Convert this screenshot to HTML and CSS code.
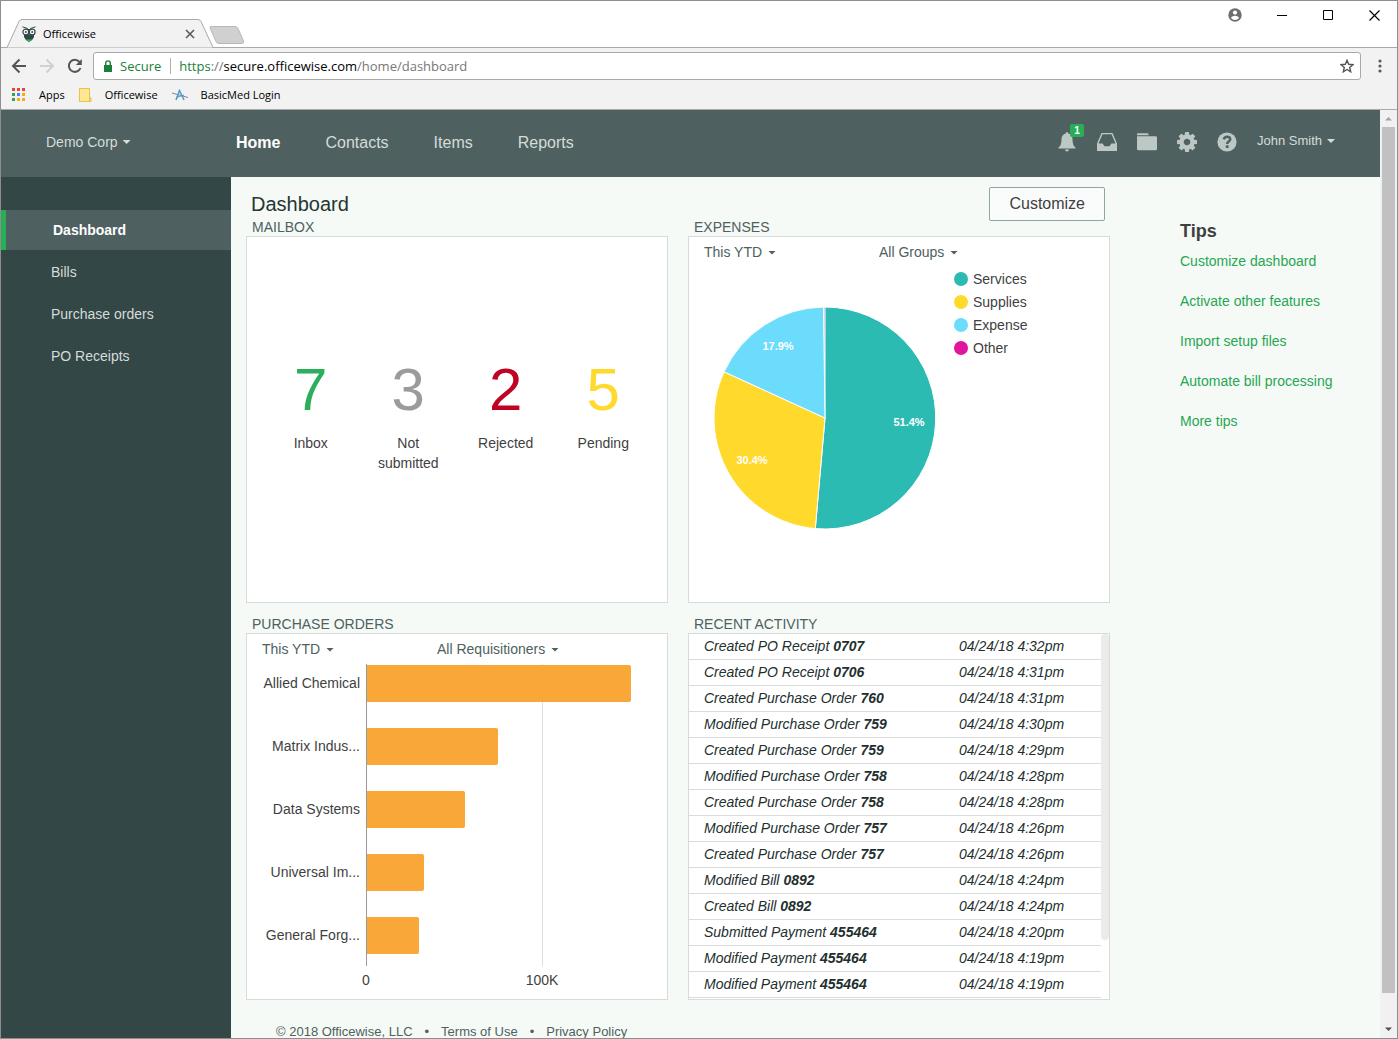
FILE: index.html
```html
<!DOCTYPE html>
<html lang="en">
<head>
<meta charset="utf-8">
<meta name="viewport" content="width=device-width, initial-scale=1">
<title>Officewise</title>
<link rel="stylesheet" href="styles.css">
</head>
<body>
<div class="window">
  <header class="browser">
    <div class="titlebar">
      <div class="tab">
        <svg class="tab-shape" viewBox="0 0 208 29" aria-hidden="true"><path d="M0 28.500H1L13 2.500Q14 .5 16 .5H192Q194 .5 195 2.500L207 28.500H208" fill="#f2f2f2" stroke="#a9a9a9"/></svg>
        <svg class="favicon" viewBox="0 0 16 16" aria-hidden="true">
          <path d="M3 8.500h10v2.500q-1 3-5 5-4-2-5-5z" fill="#334746"/>
          <path d="M5 13.500h6l-3 2.500z" fill="#2dbb62"/>
          <circle cx="4.800" cy="6" r="2.900" fill="#fff" stroke="#334746" stroke-width="1.200"/>
          <circle cx="11.200" cy="6" r="2.900" fill="#fff" stroke="#334746" stroke-width="1.200"/>
          <circle cx="4.800" cy="6" r="1" fill="#334746"/><circle cx="11.200" cy="6" r="1" fill="#334746"/>
          <path d="M1.500.8 6.500 2.500 8 4 9.500 2.500 14.500.8M8 4v5" stroke="#334746" fill="none"/>
        </svg>
        <span class="tab-title">Officewise</span>
        <button class="plain tab-close" aria-label="Close tab"><svg width="10" height="10" viewBox="0 0 10 10"><path d="M1 1l8 8M9 1 1 9" stroke="#5a5a5a" stroke-width="1.600"/></svg></button>
      </div>
      <button class="plain new-tab" aria-label="New tab"><svg width="36" height="18" viewBox="0 0 36 18"><path d="M2 .5H26Q28 .5 29 2.500L34.500 15Q35 17.500 33 17.500H10Q8 17.500 7 15.500L1 2Q.5 .5 2 .5z" fill="#d0d0d0" stroke="#b8b8b8"/></svg></button>
      <div class="window-controls">
        <button class="plain" aria-label="Profile"><svg width="14" height="14" viewBox="0 0 14 14"><circle cx="7" cy="7" r="6.700" fill="#6e6e6e"/><circle cx="7" cy="4.600" r="2.100" fill="#fff"/><path d="M2.800 9.800Q4.500 7.700 7 7.700t4.200 2.100Q9.500 12 7 12T2.800 9.800z" fill="#fff"/></svg></button>
        <button class="plain" aria-label="Minimize"><svg width="11" height="11" viewBox="0 0 11 11"><path d="M0 5.500h10" stroke="#000"/></svg></button>
        <button class="plain" aria-label="Maximize"><svg width="11" height="11" viewBox="0 0 11 11"><path d="M.5 .5h9v9h-9z" fill="none" stroke="#000"/></svg></button>
        <button class="plain" aria-label="Close"><svg width="11" height="11" viewBox="0 0 11 11"><path d="M.5 .5l10 10M10.500 .5l-10 10" stroke="#000" stroke-width="1.200"/></svg></button>
      </div>
    </div>
    <div class="toolbar">
      <div class="history">
        <button class="plain" aria-label="Back"><svg width="16" height="16" viewBox="0 0 16 16"><path d="M15 8H2M8.500 1.500 2 8l6.500 6.500" fill="none" stroke="#555" stroke-width="2"/></svg></button>
        <button class="plain" aria-label="Forward"><svg width="16" height="16" viewBox="0 0 16 16"><path d="M1 8h13M7.500 1.500 14 8l-6.500 6.500" fill="none" stroke="#d0d0d0" stroke-width="2"/></svg></button>
        <button class="plain" aria-label="Reload"><svg width="16" height="16" viewBox="0 0 16 16"><path d="M13.500 10A6 6 0 1 1 12.500 4" fill="none" stroke="#555" stroke-width="2"/><path d="M14.800 1v6h-6z" fill="#555"/></svg></button>
      </div>
      <div class="address">
        <svg width="8" height="12" viewBox="0 0 8 12" aria-hidden="true"><path d="M0 5h8v7H0z" fill="#1a7f37"/><path d="M1.700 5V3.200a2.300 2.300 0 0 1 4.600 0V5" fill="none" stroke="#1a7f37" stroke-width="1.400"/></svg>
        <span class="secure">Secure</span>
        <span class="url"><span class="scheme">https</span><span class="dim">://</span>secure.officewise.com<span class="dim">/home/dashboard</span></span>
        <button class="plain" aria-label="Bookmark this page"><svg width="14" height="14" viewBox="0 0 14 14"><path d="M7 1.300 8.700 5.300 13 5.700 9.700 8.500 10.700 12.800 7 10.500 3.300 12.800 4.300 8.500 1 5.700 5.300 5.300z" fill="none" stroke="#555" stroke-width="1.400"/></svg></button>
      </div>
      <button class="plain" aria-label="Browser menu"><svg width="4" height="14" viewBox="0 0 4 14"><circle cx="2" cy="2" r="1.600" fill="#5a5a5a"/><circle cx="2" cy="7" r="1.600" fill="#5a5a5a"/><circle cx="2" cy="12" r="1.600" fill="#5a5a5a"/></svg></button>
    </div>
    <nav class="bookmarks" aria-label="Bookmarks">
      <a href="#"><svg width="14" height="14" viewBox="0 0 14 14" aria-hidden="true"><g fill="#ea4335"><path d="M0 0h3v3H0zM5 0h3v3H5zM10 0h3v3h-3zM0 5h3v3H0z"/></g><path d="M5 5h3v3H5z" fill="#4285f4"/><path d="M10 5h3v3h-3zM5 10h3v3H5zM10 10h3v3h-3z" fill="#f9ab13"/><path d="M0 5h3v3H0zM0 10h3v3H0z" fill="#34a05a"/></svg>Apps</a>
      <a href="#"><svg width="13" height="14" viewBox="0 0 13 14" aria-hidden="true"><path d="M.5 .5h10v9h1.500v4H.5z" fill="#ffe793" stroke="#e9c04d"/><path d="M10.500 9.500v4" stroke="#e9c04d"/></svg>Officewise</a>
      <a href="#"><svg width="16" height="12" viewBox="0 0 16 12" aria-hidden="true"><path d="M4 11 7.500 1.500 12 11" fill="none" stroke="#3aa5dc" stroke-width="1.500"/><path d="M0 4l16 4.500M4 8.500 12 6" stroke="#7d8b95"/></svg>BasicMed Login</a>
    </nav>
  </header>

  <div class="viewport">
    <div class="app">
      <header class="app-header">
        <button class="plain company">Demo Corp<span class="caret"></span></button>
        <nav class="main-nav" aria-label="Main">
          <a class="current" href="#">Home</a>
          <a href="#">Contacts</a>
          <a href="#">Items</a>
          <a href="#">Reports</a>
        </nav>
        <div class="tools">
          <button class="plain tool" aria-label="Notifications">
            <svg viewBox="0 0 20 20"><path d="M10 0Q11.300 0 11.300 1.500 15.500 2.800 15.500 7.500 15.500 13.500 18.500 15.500V16.500H1.500V15.500Q4.500 13.500 4.500 7.500 4.500 2.800 8.700 1.500 8.700 0 10 0zM8 17.500h4q0 2-2 2t-2-2z" fill="currentColor"/></svg>
            <span class="badge">1</span>
          </button>
          <button class="plain tool" aria-label="Inbox"><svg viewBox="0 0 20 20"><path d="M4.500 1h11L20 11.500V19H0v-7.500zM5.500 2.300 1.500 11.500h4.200L7.400 14.300h5.200l1.700-2.800h4.200L14.500 2.300z" fill="currentColor" fill-rule="evenodd"/></svg></button>
          <button class="plain tool" aria-label="Files"><svg viewBox="0 0 20 20"><path d="M0 3.500V2Q0 1.200 1 1.200H10Q11.300 1.200 11.700 2.600V3.200H.5zM0 4.300H18.500Q20 4.300 20 5.500V17Q20 18.300 18.700 18.300H1.300Q0 18.300 0 17z" fill="currentColor"/></svg></button>
          <button class="plain tool" aria-label="Settings"><svg viewBox="0 128 1536 1536"><path d="M1024 896q0-106-75-181t-181-75-181 75-75 181 75 181 181 75 181-75 75-181zm512-109v222q0 12-8 23t-20 13l-185 28q-19 54-39 91 35 50 107 138 10 12 10 25t-9 23q-27 37-99 108t-94 71q-12 0-26-9l-138-108q-44 23-91 38-16 136-29 186-7 28-36 28h-222q-14 0-24.500-8.500t-11.500-21.500l-28-184q-49-16-90-37l-141 107q-10 9-25 9-14 0-25-11-126-114-165-168-7-10-7-23 0-12 8-23 15-21 51-66.500t54-70.500q-27-50-41-99l-183-27q-13-2-21-12.500t-8-23.500v-222q0-12 8-23t19-13l186-28q14-46 39-92-40-57-107-138-10-12-10-24 0-10 9-23 26-36 98.500-107.500t94.500-71.500q13 0 26 10l138 107q44-23 91-38 16-136 29-186 7-28 36-28h222q14 0 24.500 8.500t11.500 21.500l28 184q49 16 90 37l142-107q9-9 24-9 13 0 25 10 129 119 165 170 7 8 7 22 0 12-8 23-15 21-51 66.500t-54 70.500q26 50 41 98l183 28q13 2 21 12.500t8 23.500z" fill="currentColor"/></svg></button>
          <button class="plain tool" aria-label="Help"><svg viewBox="0 0 20 20"><circle cx="10" cy="10" r="9.600" fill="currentColor"/><path d="M6.700 7.300Q7.500 4.700 10 4.700 13.200 4.700 13.200 7.300 13.200 8.800 11.500 9.700 10.200 10.400 10.200 12" fill="none" stroke="#4e6160" stroke-width="2.600"/><path d="M8.800 13.300h2.800v2.700H8.800z" fill="#4e6160"/></svg></button>
          <button class="plain user">John Smith<span class="caret"></span></button>
        </div>
      </header>

      <div class="body">
        <nav class="sidebar" aria-label="Home">
          <a class="current" href="#">Dashboard</a>
          <a href="#">Bills</a>
          <a href="#">Purchase orders</a>
          <a href="#">PO Receipts</a>
        </nav>

        <main class="content">
          <div class="page-head">
            <h1>Dashboard</h1>
            <button class="customize">Customize</button>
          </div>
          <div class="panels">
            <section class="panel">
              <h2>MAILBOX</h2>
              <div class="card mailbox">
                <a class="stat inbox" href="#"><b>7</b><span>Inbox</span></a>
                <a class="stat draft" href="#"><b>3</b><span>Not submitted</span></a>
                <a class="stat rejected" href="#"><b>2</b><span>Rejected</span></a>
                <a class="stat pending" href="#"><b>5</b><span>Pending</span></a>
              </div>
            </section>

            <section class="panel">
              <h2>EXPENSES</h2>
              <div class="card">
                <div class="filters">
                  <span class="filter"><select aria-label="Expenses period"><option>This YTD</option></select><span class="caret"></span></span>
                  <span class="filter"><select aria-label="Expenses group"><option>All Groups</option></select><span class="caret"></span></span>
                </div>
                <div class="pie-chart">
                  <svg class="pie" viewBox="-111 -111 222 222" role="img" aria-label="Expenses by group">
                    <g stroke="#fff" stroke-width="1">
                      <path d="M0 0-2 -111H0z" fill="#e0169e"/>
                      <path d="M0 0V-111A111 111 0 1 1 -9.700 110.600z" fill="#2bbbb2"/>
                      <path d="M0 0-9.700 110.600A111 111 0 0 1 -100.900 -46.200z" fill="#ffd92c"/>
                      <path d="M0 0-100.900 -46.200A111 111 0 0 1 -1.500 -111z" fill="#6bdcfb"/>
                    </g>
                    <g class="pie-labels">
                      <text x="84" y="8">51.4%</text>
                      <text x="-73" y="46">30.4%</text>
                      <text x="-47" y="-68">17.9%</text>
                    </g>
                  </svg>
                  <ul class="legend">
                    <li class="services">Services</li>
                    <li class="supplies">Supplies</li>
                    <li class="expense">Expense</li>
                    <li class="other">Other</li>
                  </ul>
                </div>
              </div>
            </section>

            <section class="panel">
              <h2>PURCHASE ORDERS</h2>
              <div class="card">
                <div class="filters">
                  <span class="filter"><select aria-label="Purchase orders period"><option>This YTD</option></select><span class="caret"></span></span>
                  <span class="filter"><select aria-label="Requisitioner"><option>All Requisitioners</option></select><span class="caret"></span></span>
                </div>
                <div class="bar-chart">
                  <ul class="bar-names">
                    <li>Allied Chemical</li>
                    <li>Matrix Indus...</li>
                    <li>Data Systems</li>
                    <li>Universal Im...</li>
                    <li>General Forg...</li>
                  </ul>
                  <div class="plot">
                    <div class="bar" style="width:264px"></div>
                    <div class="bar" style="width:131px"></div>
                    <div class="bar" style="width:98px"></div>
                    <div class="bar" style="width:57px"></div>
                    <div class="bar" style="width:52px"></div>
                  </div>
                </div>
                <div class="ticks"><span>0</span><span>100K</span></div>
              </div>
            </section>

            <section class="panel">
              <h2>RECENT ACTIVITY</h2>
              <div class="card activity">
                <table>
                  <tbody>
                    <tr><td>Created PO Receipt <b>0707</b></td><td>04/24/18 4:32pm</td></tr>
                    <tr><td>Created PO Receipt <b>0706</b></td><td>04/24/18 4:31pm</td></tr>
                    <tr><td>Created Purchase Order <b>760</b></td><td>04/24/18 4:31pm</td></tr>
                    <tr><td>Modified Purchase Order <b>759</b></td><td>04/24/18 4:30pm</td></tr>
                    <tr><td>Created Purchase Order <b>759</b></td><td>04/24/18 4:29pm</td></tr>
                    <tr><td>Modified Purchase Order <b>758</b></td><td>04/24/18 4:28pm</td></tr>
                    <tr><td>Created Purchase Order <b>758</b></td><td>04/24/18 4:28pm</td></tr>
                    <tr><td>Modified Purchase Order <b>757</b></td><td>04/24/18 4:26pm</td></tr>
                    <tr><td>Created Purchase Order <b>757</b></td><td>04/24/18 4:26pm</td></tr>
                    <tr><td>Modified Bill <b>0892</b></td><td>04/24/18 4:24pm</td></tr>
                    <tr><td>Created Bill <b>0892</b></td><td>04/24/18 4:24pm</td></tr>
                    <tr><td>Submitted Payment <b>455464</b></td><td>04/24/18 4:20pm</td></tr>
                    <tr><td>Modified Payment <b>455464</b></td><td>04/24/18 4:19pm</td></tr>
                    <tr><td>Modified Payment <b>455464</b></td><td>04/24/18 4:19pm</td></tr>
                  </tbody>
                </table>
                <div class="mini-scroll"></div>
              </div>
            </section>
          </div>
          <footer class="footer">
            <span>© 2018 Officewise, LLC</span><span>•</span><a href="#">Terms of Use</a><span>•</span><a href="#">Privacy Policy</a>
          </footer>
        </main>

        <aside class="tips">
          <h2>Tips</h2>
          <a href="#">Customize dashboard</a>
          <a href="#">Activate other features</a>
          <a href="#">Import setup files</a>
          <a href="#">Automate bill processing</a>
          <a href="#">More tips</a>
        </aside>
      </div>
    </div>
    <div class="scrollbar" aria-hidden="true">
      <svg viewBox="0 0 17 17"><path d="M5 10.500h7L8.500 7z" fill="#a3a3a3"/></svg>
      <div class="thumb"></div>
      <svg viewBox="0 0 17 17"><path d="M5 6.500h7L8.500 10z" fill="#505050"/></svg>
    </div>
  </div>
</div>
</body>
</html>
```
FILE: styles.css
```css
* { box-sizing: border-box; }

body {
  margin: 0;
  font-family: "Liberation Sans", Arial, sans-serif;
  font-size: 14px;
  line-height: 20px;
  color: #3f3f3f;
}

h1, h2, ul { margin: 0; padding: 0; font-weight: normal; list-style: none; }
a { color: inherit; text-decoration: none; }
svg { display: block; }

.plain {
  display: flex;
  align-items: center;
  padding: 0;
  border: 0;
  background: none;
  font: inherit;
  color: inherit;
}

.window {
  display: flex;
  flex-direction: column;
  height: 100vh;
  border: 1px solid #8e8e8e;
  overflow: hidden;
}

/* Browser frame */
.browser {
  background: #f2f2f2;
  border-bottom: 1px solid #a9a9a9;
  font-family: "Open Sans", "Noto Sans", sans-serif;
  font-size: 11px;
  color: #000;
}

.titlebar {
  display: flex;
  align-items: flex-end;
  height: 47px;
  padding-left: 5px;
  background: #fff;
  box-shadow: inset 0 -1px #a9a9a9;
}

.tab {
  position: relative;
  display: flex;
  align-items: center;
  gap: 6px;
  width: 208px;
  height: 29px;
  padding: 0 19px 0 15px;
}

.tab-shape { position: absolute; inset: 0; width: 208px; height: 29px; }
.favicon { position: relative; width: 16px; height: 16px; }
.tab-title { position: relative; flex: 1; }
.tab-close { position: relative; }
.new-tab { margin: 0 0 4px -5px; }

.window-controls {
  display: flex;
  align-items: center;
  gap: 35px;
  align-self: flex-start;
  height: 28px;
  margin-left: auto;
  padding-right: 17px;
}

.toolbar {
  display: flex;
  align-items: center;
  gap: 17px;
  height: 36px;
  padding: 0 15px 0 10px;
}

.history { display: flex; gap: 12px; }

.address {
  display: flex;
  align-items: center;
  flex: 1;
  gap: 8px;
  height: 28px;
  margin-left: -7px;
  padding: 0 6px 0 10px;
  border: 1px solid #a9a9a9;
  border-radius: 3px;
  background: #fff;
  font-size: 13px;
}

.secure {
  padding-right: 9px;
  border-right: 1px solid #b0b0b0;
  line-height: 16px;
  color: #1a7f37;
}

.url { flex: 1; }
.scheme { color: #1a7f37; }
.dim { color: #777; }

.bookmarks {
  display: flex;
  align-items: center;
  gap: 14px;
  height: 25px;
  padding: 0 11px 4px;
}

.bookmarks a { display: flex; align-items: center; gap: 13px; }

/* Page viewport */
.viewport { display: flex; flex: 1; min-height: 0; }

.app {
  flex: 1;
  display: flex;
  flex-direction: column;
  min-width: 0;
  overflow: hidden;
  background: #f5faf6;
}

.scrollbar {
  display: flex;
  flex-direction: column;
  width: 17px;
  background: #f1f1f1;
}

.scrollbar svg { flex: none; width: 17px; height: 17px; }
.scrollbar svg:last-child { margin-top: auto; }
.thumb { height: 95%; max-height: calc(100% - 62px); margin: 0 2px; background: #c1c1c1; }

.caret {
  width: 8px;
  height: 4px;
  margin: 1px 0 0 5px;
  background: currentColor;
  clip-path: polygon(0 0, 100% 0, 50% 100%);
  pointer-events: none;
}

/* Application header */
.app-header {
  display: flex;
  align-items: center;
  flex: none;
  height: 67px;
  padding: 0 45px 2px;
  background: #4e6160;
  color: #d5dcda;
}

.company { width: 190px; padding-bottom: 2px; }
.main-nav { display: flex; gap: 45px; font-size: 16px; }
.main-nav .current { font-weight: bold; color: #fff; }

.tools { display: flex; align-items: center; gap: 20px; margin-left: auto; padding-bottom: 2px; }
.tool { position: relative; width: 20px; height: 20px; color: #bdc8c5; }
.tool svg { width: 20px; height: 20px; }

.badge {
  position: absolute;
  left: 13px;
  top: -8px;
  width: 14px;
  border-radius: 2px;
  background: #27ae57;
  font-size: 10px;
  font-weight: bold;
  line-height: 13px;
  text-align: center;
  color: #fff;
}

.user { padding-bottom: 2px; font-size: 13px; }

/* Columns */
.body {
  display: grid;
  grid-template-columns: 230px minmax(0, 1fr) 200px;
  flex: 1;
}

.sidebar {
  display: flex;
  flex-direction: column;
  gap: 2px;
  padding-top: 33px;
  background: #334746;
  color: #d5dcda;
}

.sidebar a { padding: 10px 0 10px 50px; }

.sidebar .current {
  padding-left: 47px;
  border-left: 5px solid #27ae57;
  background: #4e6160;
  font-weight: bold;
  color: #fff;
}

.content { padding: 10px 70px 0 15px; }

.page-head {
  display: flex;
  justify-content: space-between;
  height: 31px;
  padding: 0 5px;
}

h1 { font-size: 20px; line-height: 34px; color: #263534; }

.customize {
  height: 34px;
  padding: 0 19px;
  border: 1px solid #8fa6a4;
  border-radius: 2px;
  background: #fafcfb;
  font: inherit;
  font-size: 16px;
  color: #3f3f3f;
}

.panels {
  display: grid;
  grid-template-columns: 1fr 1fr;
  gap: 12px 20px;
}

.panel h2 { padding-left: 6px; font-size: 14px; line-height: 18px; color: #4e6160; }

.card {
  height: 367px;
  padding: 5px 15px;
  border: 1px solid #d6dcda;
  background: #fff;
}

/* Mailbox */
.mailbox { display: flex; padding-top: 123px; }

.stat {
  display: flex;
  flex-direction: column;
  align-items: center;
  flex: 1;
  gap: 13px;
  text-align: center;
}

.stat b { font-size: 60px; font-weight: normal; line-height: 60px; }
.stat span { max-width: 70px; }
.inbox b { color: #2dae5c; }
.draft b { color: #9b9b9b; }
.rejected b { color: #c00324; }
.pending b { color: #ffd92c; }

/* Chart filters */
.filters { display: flex; color: #4e6160; }
.filter { display: flex; align-items: center; min-width: 175px; }

.filter select {
  padding: 0;
  border: 0;
  background: none;
  appearance: none;
  font: inherit;
  color: inherit;
}

/* Pie */
.pie-chart { display: flex; gap: 18px; padding: 5px 0 0 10px; }
.pie { width: 222px; height: 222px; margin-top: 40px; flex: none; }
.pie-labels { font-size: 11px; font-weight: bold; fill: #fff; text-anchor: middle; }
.legend li { display: flex; align-items: center; gap: 5px; height: 23px; }
.legend li::before { content: ""; width: 14px; height: 14px; border-radius: 50%; background: currentColor; }
.legend .services::before { background: #2bbbb2; }
.legend .supplies::before { background: #ffd92c; }
.legend .expense::before { background: #6bdcfb; }
.legend .other::before { background: #e0169e; }

/* Bars */
.bar-chart { display: flex; gap: 6px; padding-top: 5px; }

.bar-names {
  display: flex;
  flex-direction: column;
  gap: 26px;
  width: 98px;
  padding-top: 1px;
  line-height: 37px;
  text-align: right;
  white-space: nowrap;
}

.plot {
  display: flex;
  flex-direction: column;
  gap: 26px;
  flex: 1;
  height: 302px;
  padding-top: 1px;
  border-left: 1px solid #9a9a9a;
  background: linear-gradient(#e0e0e0, #e0e0e0) 175px 0 / 1px 100% no-repeat;
}

.bar { height: 37px; border-radius: 0 2px 2px 0; background: #f9a738; }
.ticks { display: grid; grid-template-columns: 176px 176px; padding: 4px 0 0 16px; text-align: center; }

/* Recent activity */
.activity { display: flex; padding: 0; overflow: hidden; }

.activity table {
  flex: 1;
  align-self: flex-start;
  border-collapse: separate;
  border-spacing: 0;
  font-style: italic;
  color: #222f2e;
}

.activity td { height: 26px; padding: 0 0 2px 15px; border-bottom: 1px solid #d9dcdb; }
.activity td:last-child { width: 142px; padding-left: 0; }
.mini-scroll { width: 8px; height: 306px; border-radius: 4px; background: #ebebeb; }

.footer {
  display: flex;
  gap: 12px;
  padding: 22px 30px;
  font-size: 13px;
  color: #4e6160;
}

.tips {
  display: flex;
  flex-direction: column;
  gap: 20px;
  padding-top: 44px;
  color: #27a653;
}

.tips h2 { margin-bottom: -10px; font-size: 18px; font-weight: bold; color: #3f3f3f; }
```
